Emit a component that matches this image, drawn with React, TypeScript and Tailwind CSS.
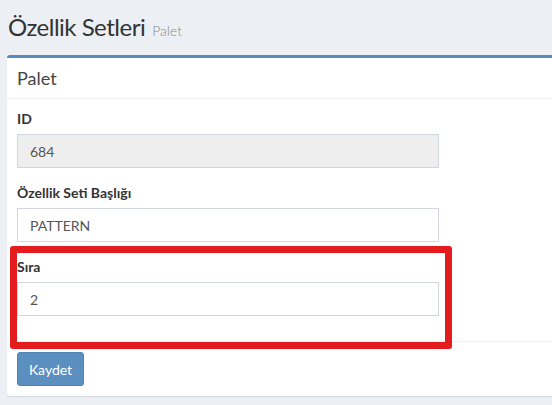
import React from "react";

export default function App() {
  const font = { fontFamily: '"Source Sans Pro", Lato, "Noto Sans", sans-serif' };
  return (
    <div
      className="relative w-[552px] h-[405px] overflow-hidden bg-[#ecf0f5] text-[#333]"
      style={font}
    >
      <div className="pl-[8px] pt-[14px] h-[55px]">
        <h1 className="m-0 text-[24px] leading-[26px] font-normal text-[#333] tracking-[-0.5px]">
          Özellik Setleri
          <span className="pl-[7px] text-[14px] text-[#8a8a8a] font-light tracking-normal">Palet</span>
        </h1>
      </div>
      <div className="ml-[7px] w-[560px] bg-white border-t-[3px] border-[#598cb9] rounded-[3px] shadow-[0_1px_1px_rgba(0,0,0,0.1)]">
        <div className="h-[41px] px-[10px] flex items-center border-b border-[#f0f0f0]">
          <h3 className="m-0 text-[18px] leading-[20px] text-[#444]">Palet</h3>
        </div>
        <div className="p-[10px] pb-[10px] w-[442px]">
          <div className="mb-[15px]">
            <label className="block h-[20px] leading-[20px] mb-[5px] text-[14px] font-bold text-[#333]">ID</label>
            <div className="h-[34px] px-[12px] flex items-center bg-[#eeeeee] border border-[#d2d6de] text-[14px] text-[#555]">
              684
            </div>
          </div>
          <div className="mb-[15px]">
            <label className="block h-[20px] leading-[20px] mb-[5px] text-[14px] font-bold text-[#333]">
              Özellik Seti Başlığı
            </label>
            <div className="h-[34px] px-[12px] flex items-center bg-white border border-[#d2d6de] text-[14px] text-[#555]">
              PATTERN
            </div>
          </div>
          <div className="mb-[15px]">
            <label className="block h-[20px] leading-[20px] mb-[5px] text-[14px] font-bold text-[#333]">Sıra</label>
            <div className="h-[34px] px-[12px] flex items-center bg-white border border-[#d2d6de] text-[14px] text-[#555]">
              2
            </div>
          </div>
        </div>
        <div className="border-t border-[#f0f0f0] p-[10px]">
          <button className="h-[34px] w-[67px] rounded-[3px] bg-[#5b8fbf] border border-[#5284b3] text-white text-[14px]">
            Kaydet
          </button>
        </div>
      </div>
      <div className="absolute left-[10px] top-[246px] w-[442px] h-[103px] border-[7px] border-[#e31c1e] rounded-[3px] pointer-events-none" />
    </div>
  );
}
